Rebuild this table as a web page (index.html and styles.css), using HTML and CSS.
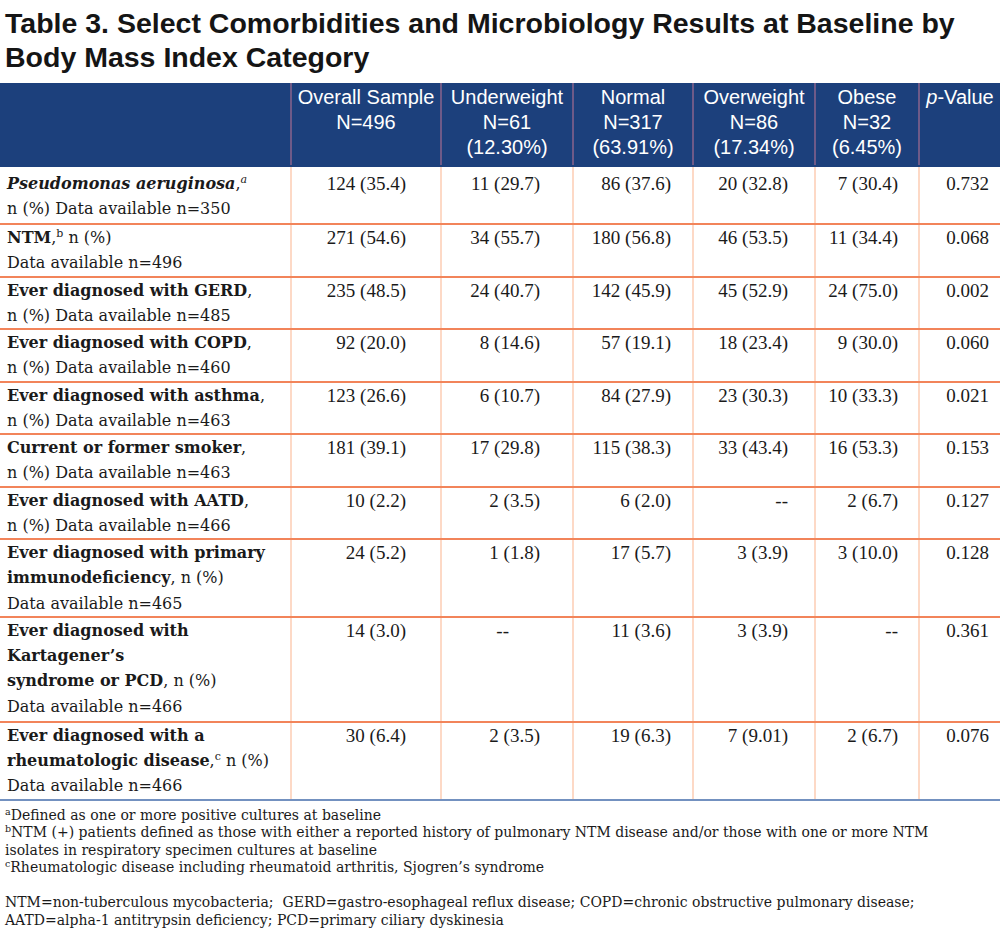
FILE: index.html
```html
<!DOCTYPE html>
<html lang="en">
<head>
<meta charset="utf-8">
<title>Table 3</title>
<link rel="stylesheet" href="styles.css">
</head>
<body>
<div class="page">
  <h1 class="title">Table 3. Select Comorbidities and Microbiology Results at Baseline by<br>Body Mass Index Category</h1>
  <table class="data">
    <colgroup>
      <col class="c-label"><col class="c-all"><col class="c-under"><col class="c-norm"><col class="c-over"><col class="c-obese"><col class="c-p">
    </colgroup>
    <thead>
      <tr>
        <th></th>
        <th>Overall Sample<br>N=496</th>
        <th>Underweight<br>N=61<br>(12.30%)</th>
        <th>Normal<br>N=317<br>(63.91%)</th>
        <th>Overweight<br>N=86<br>(17.34%)</th>
        <th>Obese<br>N=32<br>(6.45%)</th>
        <th><i>p</i>-Value</th>
      </tr>
    </thead>
    <tbody>
      <tr class="first">
        <td class="label"><b><i>Pseudomonas aeruginosa</i></b>,<sup class="isup">a</sup><br>n (%) Data available n=350</td>
        <td class="n n1">124 (35.4)</td><td class="n n2">11 (29.7)</td><td class="n n3">86 (37.6)</td><td class="n n4">20 (32.8)</td><td class="n n5">7 (30.4)</td><td class="n n6">0.732</td>
      </tr>
      <tr>
        <td class="label"><b>NTM</b>,<sup>b</sup> n (%)<br>Data available n=496</td>
        <td class="n n1">271 (54.6)</td><td class="n n2">34 (55.7)</td><td class="n n3">180 (56.8)</td><td class="n n4">46 (53.5)</td><td class="n n5">11 (34.4)</td><td class="n n6">0.068</td>
      </tr>
      <tr>
        <td class="label"><b>Ever diagnosed with GERD</b>,<br>n (%) Data available n=485</td>
        <td class="n n1">235 (48.5)</td><td class="n n2">24 (40.7)</td><td class="n n3">142 (45.9)</td><td class="n n4">45 (52.9)</td><td class="n n5">24 (75.0)</td><td class="n n6">0.002</td>
      </tr>
      <tr>
        <td class="label"><b>Ever diagnosed with COPD</b>,<br>n (%) Data available n=460</td>
        <td class="n n1">92 (20.0)</td><td class="n n2">8 (14.6)</td><td class="n n3">57 (19.1)</td><td class="n n4">18 (23.4)</td><td class="n n5">9 (30.0)</td><td class="n n6">0.060</td>
      </tr>
      <tr>
        <td class="label"><b>Ever diagnosed with asthma</b>,<br>n (%) Data available n=463</td>
        <td class="n n1">123 (26.6)</td><td class="n n2">6 (10.7)</td><td class="n n3">84 (27.9)</td><td class="n n4">23 (30.3)</td><td class="n n5">10 (33.3)</td><td class="n n6">0.021</td>
      </tr>
      <tr>
        <td class="label"><b>Current or former smoker</b>,<br>n (%) Data available n=463</td>
        <td class="n n1">181 (39.1)</td><td class="n n2">17 (29.8)</td><td class="n n3">115 (38.3)</td><td class="n n4">33 (43.4)</td><td class="n n5">16 (53.3)</td><td class="n n6">0.153</td>
      </tr>
      <tr>
        <td class="label"><b>Ever diagnosed with AATD</b>,<br>n (%) Data available n=466</td>
        <td class="n n1">10 (2.2)</td><td class="n n2">2 (3.5)</td><td class="n n3">6 (2.0)</td><td class="n n4">--</td><td class="n n5">2 (6.7)</td><td class="n n6">0.127</td>
      </tr>
      <tr>
        <td class="label"><b>Ever diagnosed with primary<br>immunodeficiency</b>, n (%)<br>Data available n=465</td>
        <td class="n n1">24 (5.2)</td><td class="n n2">1 (1.8)</td><td class="n n3">17 (5.7)</td><td class="n n4">3 (3.9)</td><td class="n n5">3 (10.0)</td><td class="n n6">0.128</td>
      </tr>
      <tr class="tall">
        <td class="label"><b>Ever diagnosed with<br>Kartagener’s<br>syndrome or PCD</b>, n (%)<br>Data available n=466</td>
        <td class="n n1">14 (3.0)</td><td class="n n2 dash">--</td><td class="n n3">11 (3.6)</td><td class="n n4">3 (3.9)</td><td class="n n5">--</td><td class="n n6">0.361</td>
      </tr>
      <tr class="last">
        <td class="label"><b>Ever diagnosed with a<br>rheumatologic disease</b>,<sup>c</sup> n (%)<br>Data available n=466</td>
        <td class="n n1">30 (6.4)</td><td class="n n2">2 (3.5)</td><td class="n n3">19 (6.3)</td><td class="n n4">7 (9.01)</td><td class="n n5">2 (6.7)</td><td class="n n6">0.076</td>
      </tr>
    </tbody>
  </table>
  <div class="notes">
    <p><sup>a</sup>Defined as one or more positive cultures at baseline</p>
    <p><sup>b</sup>NTM (+) patients defined as those with either a reported history of pulmonary NTM disease and/or those with one or more NTM<br>isolates in respiratory specimen cultures at baseline</p>
    <p><sup>c</sup>Rheumatologic disease including rheumatoid arthritis, Sjogren’s syndrome</p>
    <p class="gap">NTM=non-tuberculous mycobacteria;&nbsp; GERD=gastro-esophageal reflux disease; COPD=chronic obstructive pulmonary disease;<br>AATD=alpha-1 antitrypsin deficiency; PCD=primary ciliary dyskinesia</p>
  </div>
</div>
</body>
</html>
```

FILE: styles.css
```css
html, body {
  margin: 0;
  padding: 0;
  background: #ffffff;
}

.page {
  width: 1000px;
  padding-top: 6px;
}

.title {
  margin: 0 0 9px 0;
  padding-left: 5px;
  font-family: "Liberation Sans", Arial, sans-serif;
  font-weight: bold;
  font-size: 28.5px;
  line-height: 34px;
  color: #151515;
}

.data {
  width: 1000px;
  table-layout: fixed;
  border-collapse: collapse;
}

.c-label { width: 291px; }
.c-all { width: 150px; }
.c-under { width: 132px; }
.c-norm { width: 120px; }
.c-over { width: 122px; }
.c-obese { width: 104px; }
.c-p { width: 81px; }

.data thead th {
  background: #1c407c;
  color: #ffffff;
  font-family: "Liberation Sans", Arial, sans-serif;
  font-weight: normal;
  font-size: 20px;
  line-height: 25px;
  text-align: center;
  vertical-align: top;
  padding: 2px 0 5px 0;
  border-left: 2px solid #6e5a88;
  border-bottom: 2px solid #1c407c;
}

.data thead th:first-child {
  border-left: none;
}

.data td {
  vertical-align: top;
  line-height: 25.25px;
  padding: 0;
  border-left: 2px solid #fdd9c6;
  border-bottom: 2px solid #f2845a;
  color: #1a1a1a;
}

.data td.label {
  border-left: none;
  padding-left: 7px;
  font-family: "DejaVu Serif", "Bookman Old Style", serif;
  font-size: 16px;
}

.data tr.first td {
  padding-top: 4px;
  padding-bottom: 1.5px;
}

.data tr.tall td {
  padding-bottom: 2px;
}

.data tr.last td {
  border-bottom: 2px solid #7391c0;
}

.label sup {
  font-size: 11px;
  line-height: 0;
  vertical-align: 6px;
  font-family: "DejaVu Serif", serif;
}

.label sup.isup {
  font-style: italic;
}

.data td.n {
  font-family: "Liberation Serif", "Book Antiqua", serif;
  font-size: 19px;
  text-align: right;
}

.n1 { padding-right: 34px !important; }
.n2 { padding-right: 32px !important; }
.n3 { padding-right: 21px !important; }
.n4 { padding-right: 26px !important; }
.n5 { padding-right: 20px !important; }
.n6 { padding-right: 11px !important; }

.data td.dash {
  padding-right: 63px !important;
}

.notes {
  margin-top: 6px;
  padding-left: 5px;
  font-family: "DejaVu Serif", serif;
  font-size: 14px;
  line-height: 17.5px;
  color: #1a1a1a;
}

.notes p {
  margin: 0;
}

.notes p.gap {
  margin-top: 17.5px;
}

.notes sup {
  font-size: 9.5px;
  line-height: 0;
  vertical-align: 5px;
}
```
